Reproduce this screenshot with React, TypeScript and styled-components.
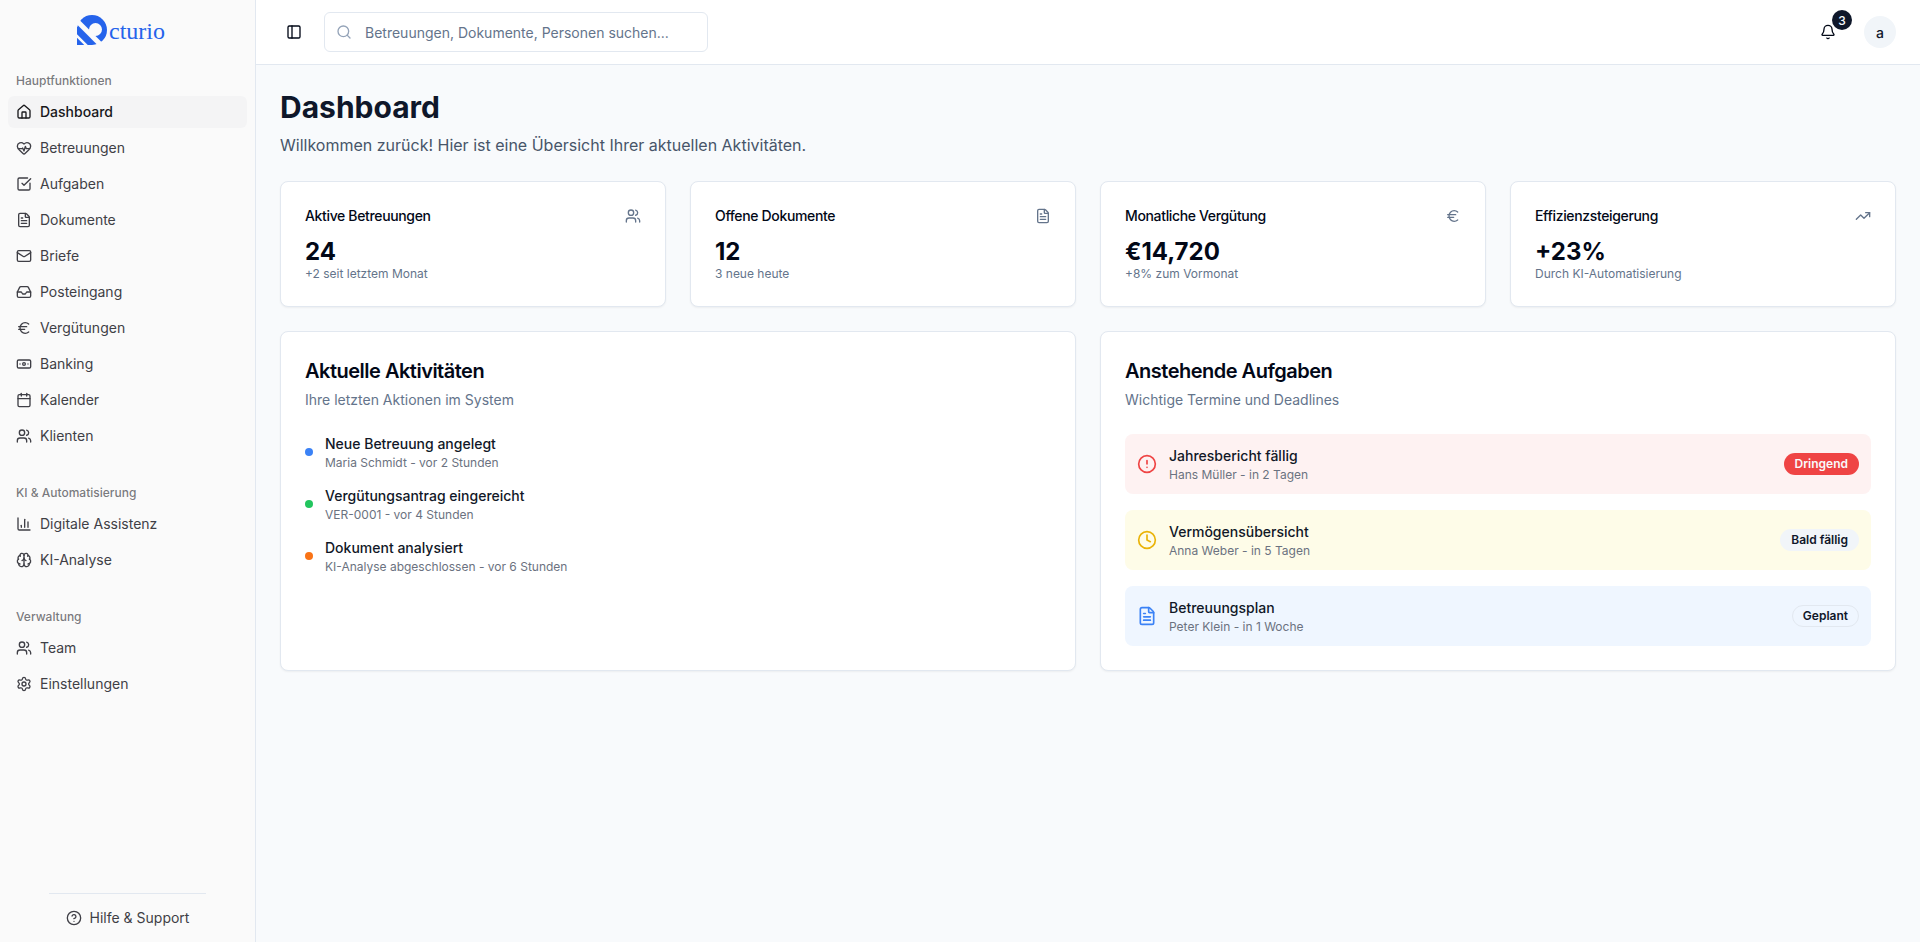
import React from "react";
import styled, { createGlobalStyle } from "styled-components";
import {
  House, HeartPulse, SquareCheckBig, FileText, Mail, Inbox, Euro, Banknote, Calendar, Users,
  ChartColumn, Brain, Settings, CircleHelp, PanelLeft, Search, Bell, TrendingUp, CircleAlert, Clock,
} from "lucide-react";

const Global = createGlobalStyle`
  * { box-sizing: border-box; }
  html, body { margin: 0; padding: 0; height: 100%; }
  body { font-family: Inter, "Noto Sans", sans-serif; color: #0f172a; background: #f8fafc; overflow: hidden; }
`;

const Shell = styled.div`
  display: flex;
  height: 942px;
`;
const Sidebar = styled.aside`
  width: 256px;
  flex: none;
  display: flex;
  flex-direction: column;
  background: #fafafa;
  border-right: 1px solid #e2e8f0;
`;
const Brand = styled.div`
  height: 64px;
  flex: none;
  display: flex;
  align-items: flex-start;
  justify-content: center;
  padding: 15px 13px 0 0;
`;
const BrandName = styled.span`
  font-family: "Liberation Serif", serif;
  font-size: 24px;
  line-height: 32px;
  color: #2563eb;
  margin-left: 2px;
`;
const NavArea = styled.nav`
  flex: 1;
  display: flex;
  flex-direction: column;
  gap: 8px;
`;
const NavGroup = styled.div`
  padding: 8px;
  margin-top: -8px;
  &:not(:first-child) { margin-top: 0; }
`;
const GroupLabel = styled.div`
  height: 32px;
  display: flex;
  align-items: center;
  padding: 0 8px;
  font-size: 12px;
  font-weight: 500;
  color: rgba(63, 63, 70, 0.7);
`;
const NavList = styled.div`
  display: flex;
  flex-direction: column;
  gap: 4px;
`;
const NavItem = styled.a<{ $active?: boolean }>`
  height: 32px;
  display: flex;
  align-items: center;
  gap: 8px;
  padding: 0 8px;
  border-radius: 6px;
  font-size: 14px;
  font-weight: ${(p) => (p.$active ? 500 : 400)};
  color: ${(p) => (p.$active ? "#18181b" : "#3f3f46")};
  background: ${(p) => (p.$active ? "#f4f4f5" : "transparent")};
  svg { flex: none; }
`;
const NavText = styled.span`
  padding-bottom: 1px;
`;
const SideFooter = styled.div`
  padding: 0 49px;
  height: 49px;
  flex: none;
`;
const HelpLink = styled.a`
  height: 48px;
  border-top: 1px solid #e2e8f0;
  display: flex;
  align-items: center;
  justify-content: center;
  gap: 8px;
  font-size: 14px;
  color: #3f3f46;
  white-space: nowrap;
`;
const Column = styled.div`
  flex: 1;
  min-width: 0;
  display: flex;
  flex-direction: column;
`;
const TopBar = styled.header`
  height: 65px;
  flex: none;
  display: flex;
  align-items: center;
  padding: 0 24px;
  gap: 16px;
  background: #fff;
  border-bottom: 1px solid #e2e8f0;
`;
const IconButton = styled.button`
  width: 28px;
  height: 28px;
  padding: 0;
  border: 0;
  background: transparent;
  color: #020817;
  display: flex;
  align-items: center;
  justify-content: center;
`;
const SearchBox = styled.div`
  width: 384px;
  height: 40px;
  position: relative;
  display: flex;
  align-items: center;
  padding-left: 40px;
  background: #fff;
  border: 1px solid #e2e8f0;
  border-radius: 6px;
  font-size: 14px;
  color: #64748b;
  svg { position: absolute; left: 11px; top: 11px; color: #94a3b8; }
`;
const TopRight = styled.div`
  margin-left: auto;
  display: flex;
  align-items: center;
  gap: 16px;
`;
const BellButton = styled.button`
  position: relative;
  width: 40px;
  height: 40px;
  padding: 0;
  border: 0;
  background: transparent;
  color: #020817;
  display: flex;
  align-items: center;
  justify-content: center;
`;
const BellCount = styled.span`
  position: absolute;
  top: -2px;
  right: -4px;
  width: 20px;
  height: 20px;
  border-radius: 50%;
  background: #0f172a;
  color: #f8fafc;
  font-family: Inter, sans-serif;
  font-size: 12px;
  font-weight: 500;
  display: flex;
  align-items: center;
  justify-content: center;
`;
const Avatar = styled.div`
  width: 32px;
  height: 32px;
  border-radius: 50%;
  background: #f1f5f9;
  display: flex;
  align-items: center;
  justify-content: center;
  font-size: 14px;
  font-weight: 500;
  color: #0f172a;
`;
const Main = styled.main`
  flex: 1;
  padding: 24px;
  display: flex;
  flex-direction: column;
`;
const Title = styled.h1`
  margin: 0;
  font-size: 30px;
  line-height: 36px;
  font-weight: 700;
  color: #0f172a;
`;
const Lead = styled.p`
  margin: 8px 0 0;
  font-size: 16px;
  line-height: 24px;
  color: #475569;
`;
const StatGrid = styled.section`
  margin-top: 24px;
  display: grid;
  grid-template-columns: repeat(4, 1fr);
  gap: 24px;
`;
const Card = styled.div`
  background: #fff;
  border: 1px solid #e2e8f0;
  border-radius: 8px;
  box-shadow: 0 1px 2px rgba(0, 0, 0, 0.05);
  padding: 24px;
`;
const StatHead = styled.div`
  display: flex;
  justify-content: space-between;
  align-items: center;
  height: 20px;
  margin-bottom: 8px;
  svg { color: #64748b; }
`;
const StatTitle = styled.div`
  font-size: 14px;
  line-height: 20px;
  font-weight: 500;
  letter-spacing: -0.025em;
  color: #020817;
`;
const StatValue = styled.div`
  font-size: 24px;
  line-height: 32px;
  font-weight: 700;
  padding-top: 2px;
  margin-bottom: -2px;
  color: #020817;
`;
const StatNote = styled.div`
  font-size: 12px;
  line-height: 16px;
  color: #64748b;
`;
const PanelGrid = styled.section`
  margin-top: 24px;
  display: grid;
  grid-template-columns: repeat(2, 1fr);
  gap: 24px;
`;
const PanelTitle = styled.h2`
  margin: 0 0 -1px;
  padding-top: 1px;
  font-size: 20px;
  line-height: 28px;
  font-weight: 600;
  letter-spacing: -0.025em;
  color: #020817;
`;
const PanelSub = styled.p`
  margin: 6px 0 24px;
  font-size: 14px;
  line-height: 20px;
  color: #64748b;
`;
const Stack = styled.div<{ $gap: number }>`
  display: flex;
  flex-direction: column;
  gap: ${(p) => p.$gap}px;
`;
const Activity = styled.div`
  display: flex;
  align-items: center;
  gap: 12px;
`;
const Dot = styled.span<{ $color: string }>`
  width: 8px;
  height: 8px;
  border-radius: 50%;
  flex: none;
  background: ${(p) => p.$color};
`;
const ItemTitle = styled.div`
  font-size: 14px;
  line-height: 20px;
  font-weight: 500;
  color: #111827;
`;
const ItemSub = styled.div`
  font-size: 12px;
  line-height: 16px;
  padding-top: 1px;
  margin-bottom: -1px;
  color: #6b7280;
`;
const Task = styled.div<{ $bg: string; $icon: string }>`
  height: 60px;
  display: flex;
  align-items: center;
  gap: 12px;
  padding: 12px;
  border-radius: 8px;
  background: ${(p) => p.$bg};
  svg { flex: none; color: ${(p) => p.$icon}; }
`;
const TaskBody = styled.div`
  flex: 1;
  min-width: 0;
`;
const Badge = styled.span<{ $variant: "red" | "gray" | "outline" }>`
  display: inline-flex;
  align-items: center;
  height: 22px;
  padding: 0 10px;
  border-radius: 999px;
  font-size: 12px;
  line-height: 16px;
  font-weight: 600;
  border: 1px solid ${(p) => (p.$variant === "outline" ? "#e2e8f0" : "transparent")};
  background: ${(p) => (p.$variant === "red" ? "#ef4444" : p.$variant === "gray" ? "#f1f5f9" : "transparent")};
  color: ${(p) => (p.$variant === "red" ? "#f8fafc" : "#0f172a")};
`;

const LogoMark = () => (
  <svg width="30" height="30" viewBox="0 0 30 30" aria-hidden="true">
    <circle cx="15" cy="15" r="15" fill="#2563eb" />
    <rect x="0" y="12" width="15" height="18" fill="#2563eb" />
    <circle cx="18.5" cy="14.5" r="6.5" fill="#fafafa" />
    <line x1="-2" y1="4" x2="25" y2="31" stroke="#fafafa" strokeWidth="5" />
    <line x1="-1" y1="20" x2="10" y2="31" stroke="#fafafa" strokeWidth="2.5" />
  </svg>
);

const groups = [
  {
    title: "Hauptfunktionen",
    items: [
      { label: "Dashboard", icon: House, active: true },
      { label: "Betreuungen", icon: HeartPulse },
      { label: "Aufgaben", icon: SquareCheckBig },
      { label: "Dokumente", icon: FileText },
      { label: "Briefe", icon: Mail },
      { label: "Posteingang", icon: Inbox },
      { label: "Vergütungen", icon: Euro },
      { label: "Banking", icon: Banknote },
      { label: "Kalender", icon: Calendar },
      { label: "Klienten", icon: Users },
    ],
  },
  {
    title: "KI & Automatisierung",
    items: [
      { label: "Digitale Assistenz", icon: ChartColumn },
      { label: "KI-Analyse", icon: Brain },
    ],
  },
  {
    title: "Verwaltung",
    items: [
      { label: "Team", icon: Users },
      { label: "Einstellungen", icon: Settings },
    ],
  },
];
const stats = [
  { title: "Aktive Betreuungen", value: "24", note: "+2 seit letztem Monat", icon: Users },
  { title: "Offene Dokumente", value: "12", note: "3 neue heute", icon: FileText },
  { title: "Monatliche Vergütung", value: "€14,720", note: "+8% zum Vormonat", icon: Euro },
  { title: "Effizienzsteigerung", value: "+23%", note: "Durch KI-Automatisierung", icon: TrendingUp },
];
const activities = [
  { color: "#3b82f6", title: "Neue Betreuung angelegt", sub: "Maria Schmidt - vor 2 Stunden" },
  { color: "#22c55e", title: "Vergütungsantrag eingereicht", sub: "VER-0001 - vor 4 Stunden" },
  { color: "#f97316", title: "Dokument analysiert", sub: "KI-Analyse abgeschlossen - vor 6 Stunden" },
];
const tasks = [
  { bg: "#fef2f2", color: "#ef4444", icon: CircleAlert, title: "Jahresbericht fällig", sub: "Hans Müller - in 2 Tagen", badge: "Dringend", variant: "red" as const },
  { bg: "#fefce8", color: "#eab308", icon: Clock, title: "Vermögensübersicht", sub: "Anna Weber - in 5 Tagen", badge: "Bald fällig", variant: "gray" as const },
  { bg: "#eff6ff", color: "#3b82f6", icon: FileText, title: "Betreuungsplan", sub: "Peter Klein - in 1 Woche", badge: "Geplant", variant: "outline" as const },
];

export default function App() {
  return (
    <>
      <Global />
      <Shell>
        <Sidebar>
          <Brand>
            <LogoMark />
            <BrandName>cturio</BrandName>
          </Brand>
          <NavArea>
            {groups.map((g) => (
              <NavGroup key={g.title}>
                <GroupLabel>{g.title}</GroupLabel>
                <NavList>
                  {g.items.map((it) => (
                    <NavItem key={it.label} $active={(it as { active?: boolean }).active}>
                      <it.icon size={16} strokeWidth={2} />
                      <NavText>{it.label}</NavText>
                    </NavItem>
                  ))}
                </NavList>
              </NavGroup>
            ))}
          </NavArea>
          <SideFooter>
            <HelpLink>
              <CircleHelp size={16} />
              Hilfe &amp; Support
            </HelpLink>
          </SideFooter>
        </Sidebar>
        <Column>
          <TopBar>
            <IconButton aria-label="Seitenleiste">
              <PanelLeft size={16} />
            </IconButton>
            <SearchBox>
              <Search size={16} />
              Betreuungen, Dokumente, Personen suchen...
            </SearchBox>
            <TopRight>
              <BellButton aria-label="Benachrichtigungen">
                <Bell size={16} />
                <BellCount>3</BellCount>
              </BellButton>
              <Avatar>a</Avatar>
            </TopRight>
          </TopBar>
          <Main>
            <Title>Dashboard</Title>
            <Lead>Willkommen zurück! Hier ist eine Übersicht Ihrer aktuellen Aktivitäten.</Lead>
            <StatGrid>
              {stats.map((s) => (
                <Card key={s.title}>
                  <StatHead>
                    <StatTitle>{s.title}</StatTitle>
                    <s.icon size={16} />
                  </StatHead>
                  <StatValue>{s.value}</StatValue>
                  <StatNote>{s.note}</StatNote>
                </Card>
              ))}
            </StatGrid>
            <PanelGrid>
              <Card>
                <PanelTitle>Aktuelle Aktivitäten</PanelTitle>
                <PanelSub>Ihre letzten Aktionen im System</PanelSub>
                <Stack $gap={16}>
                  {activities.map((a) => (
                    <Activity key={a.title}>
                      <Dot $color={a.color} />
                      <div>
                        <ItemTitle>{a.title}</ItemTitle>
                        <ItemSub>{a.sub}</ItemSub>
                      </div>
                    </Activity>
                  ))}
                </Stack>
              </Card>
              <Card>
                <PanelTitle>Anstehende Aufgaben</PanelTitle>
                <PanelSub>Wichtige Termine und Deadlines</PanelSub>
                <Stack $gap={16}>
                  {tasks.map((t) => (
                    <Task key={t.title} $bg={t.bg} $icon={t.color}>
                      <t.icon size={20} />
                      <TaskBody>
                        <ItemTitle>{t.title}</ItemTitle>
                        <ItemSub>{t.sub}</ItemSub>
                      </TaskBody>
                      <Badge $variant={t.variant}>{t.badge}</Badge>
                    </Task>
                  ))}
                </Stack>
              </Card>
            </PanelGrid>
          </Main>
        </Column>
      </Shell>
    </>
  );
}
